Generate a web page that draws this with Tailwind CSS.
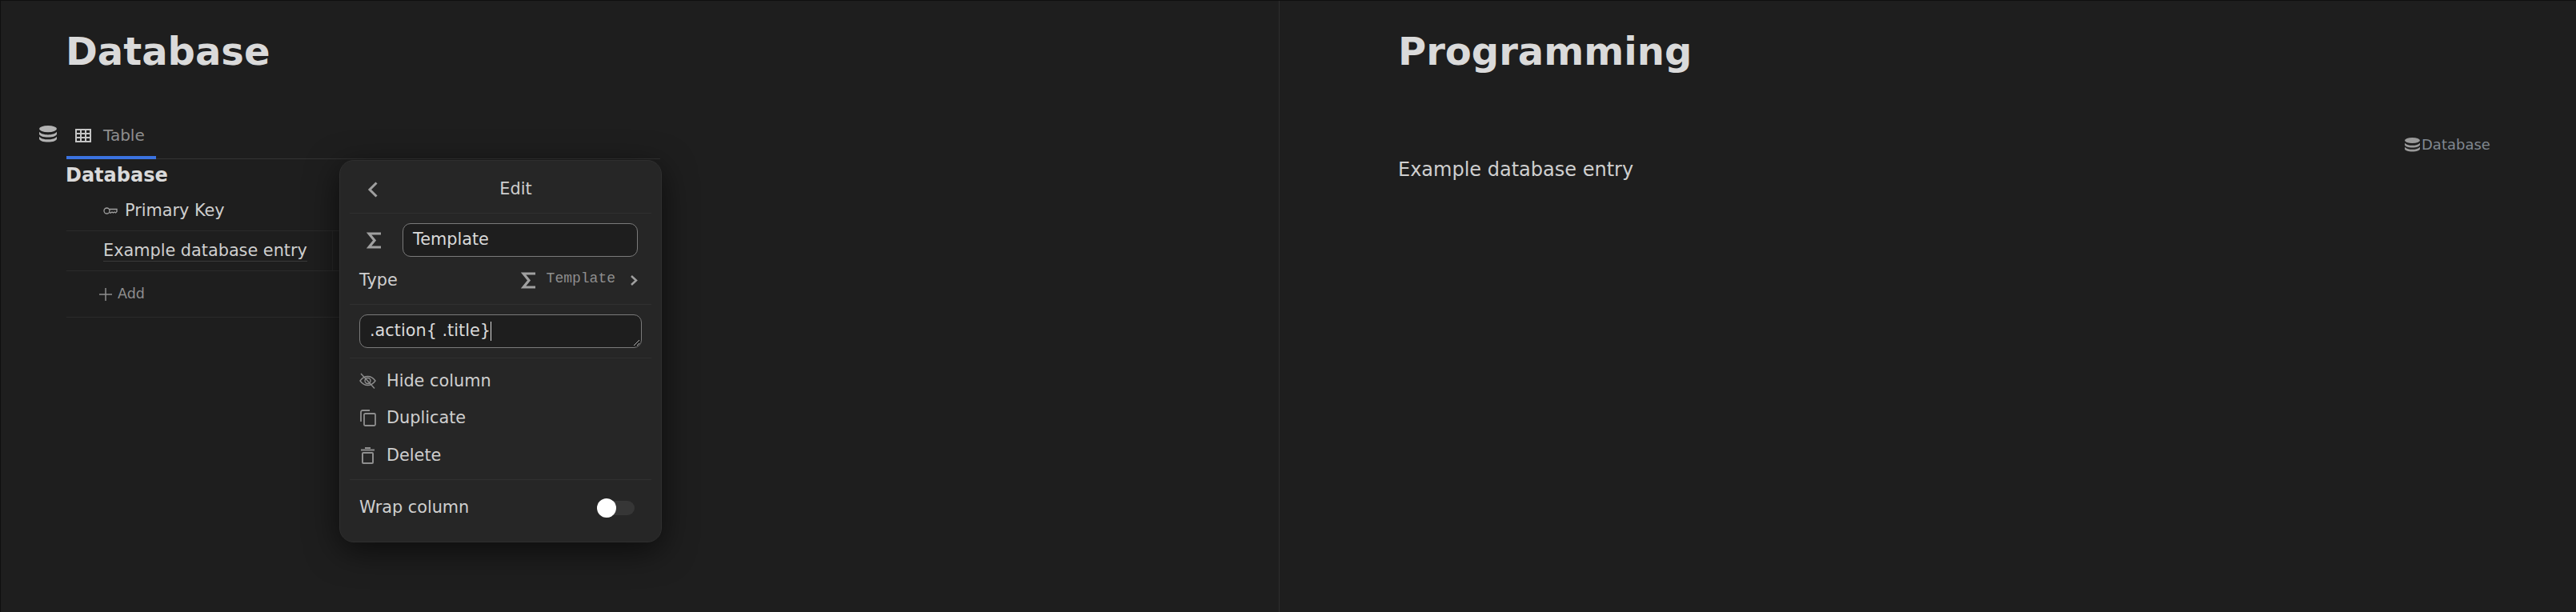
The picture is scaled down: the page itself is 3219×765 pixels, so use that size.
<!DOCTYPE html>
<html lang="en">
<head>
    <meta charset="UTF-8">
    <title>Database</title>
    <script src="https://cdn.jsdelivr.net/npm/@tailwindcss/browser@4"></script>
</head>
<body class="bg-[#1e1e1e] font-['DejaVu_Sans',sans-serif] text-[#dadada] overflow-hidden">
    <div class="flex h-[765px] w-[3219px] border-t border-l border-[#0f0f0f]">
        <!-- Left pane -->
        <div class="relative w-[1598px] shrink-0 border-r border-[#2d2d2d] pl-[82px]">
            <h1 class="-ml-[1px] pt-[35px] text-[48px] leading-[56px] font-bold text-[#dadada]">Database</h1>

            <!-- Tab bar -->
            <div class="relative mt-[53px] w-[742px] border-b border-[#333333]">
                <svg class="absolute top-[12px] -left-[34px] h-[21px] w-[22px] text-[#b3b3b3]" viewBox="2 1 20 23" preserveAspectRatio="none" fill="currentColor">
                    <ellipse cx="12" cy="5.5" rx="10" ry="4.5"/>
                    <path d="M2 9.5c1.5 2.6 5.6 4 10 4s8.5-1.4 10-4v3c0 2.500-4.500 4.500-10 4.500s-10-2-10-4.500z"/>
                    <path d="M2 16c1.500 2.600 5.600 4 10 4s8.500-1.400 10-4v3c0 2.500-4.500 4.500-10 4.500s-10-2-10-4.500z"/>
                </svg>
                <div class="-mb-px flex h-[54px] w-[112px] items-center gap-[15px] border-b-[4px] border-[#3b73e0] pb-[2px] pl-[11px] text-[20px] text-[#8e8e8e]">
                    <svg class="h-[17px] w-[20px] text-[#c4c4c4]" viewBox="0 0 20 17" fill="none" stroke="currentColor" stroke-width="2">
                        <rect x="1" y="1" width="18" height="15"/>
                        <path d="M1 6h18M1 11h18M7 1v15M13 1v15"/>
                    </svg>
                    <span>Table</span>
                </div>
            </div>

            <!-- Table -->
            <div class="w-[742px]">
                <div class="-ml-[1px] flex h-[40px] items-center text-[24px] leading-none font-bold text-[#dadada]">Database</div>
                <div class="flex h-[50px] items-center gap-[9px] border-b border-[#2a2a2a] pl-[46px] text-[20.8px] text-[#cfcfcf]">
                    <svg class="h-[9px] w-[18px] text-[#a0a0a0]" viewBox="0 0 18 9" fill="none" stroke="currentColor" stroke-width="1.3">
                        <circle cx="4.5" cy="4.5" r="3.5"/>
                        <path d="M8 2.500h9v3l-1.500 1.500-1.500-1-1.500 1-1.500-1-1.500 1H8"/>
                    </svg>
                    <span>Primary Key</span>
                </div>
                <div class="flex h-[50px] border-b border-[#2a2a2a] text-[20.8px] text-[#cfcfcf]">
                    <div class="flex w-[333px] items-center border-r border-[#262626] pl-[46px]">
                        <span class="border-b border-[#3a3a3a] leading-[25px]">Example database entry</span>
                    </div>
                </div>
                <div class="flex h-[58px] items-center gap-[7px] border-b border-[#2a2a2a] pl-[41px] text-[17.5px] text-[#8e8e8e]">
                    <svg class="h-[16px] w-[16px]" viewBox="0 0 16 16" fill="none" stroke="currentColor" stroke-width="1.5">
                        <path d="M8 0v16M0 8h16"/>
                    </svg>
                    <span>Add</span>
                </div>
            </div>

            <!-- Column editor popover -->
            <div class="absolute top-[199px] left-[423px] flex w-[403px] flex-col rounded-[18px] border border-[#2f2f2f] bg-[#262626] px-[12px] pb-[7px] text-[20.8px] text-[#cfcfcf] shadow-[0_10px_40px_rgba(0,0,0,0.6)]">
                <div class="relative flex h-[66px] items-center justify-center border-b border-[#303030] pt-[7px]">
                    <svg class="absolute top-[26px] left-[22px] h-[20px] w-[13px] text-[#a0a0a0]" viewBox="0 0 13 20" fill="none" stroke="currentColor" stroke-width="3">
                        <path d="M11.500 1.500L3 10l8.500 8.500"/>
                    </svg>
                    <span class="ml-[38px]">Edit</span>
                </div>
                <div class="flex items-center pt-[12px] pr-[17px] pl-[21px]">
                    <span class="w-[45px] shrink-0 text-[#a0a0a0]">
                        <svg class="h-[21px] w-[18px]" viewBox="0 0 18 21" fill="none" stroke="currentColor" stroke-width="3.2">
                            <path d="M18 2H3l7 8.500L3 19h15"/>
                        </svg>
                    </span>
                    <div class="flex h-[42px] grow items-center rounded-[10px] border border-[#7a7a7a] bg-[#1e1e1e] px-[12px] text-[#dadada]">Template</div>
                </div>
                <div class="flex h-[59px] items-center justify-between pr-[17px] pl-[12px]">
                    <span>Type</span>
                    <div class="flex items-center text-[#8e8e8e]">
                        <svg class="mr-[14px] h-[21px] w-[18px] text-[#a0a0a0]" viewBox="0 0 18 21" fill="none" stroke="currentColor" stroke-width="3.2">
                            <path d="M18 2H3l7 8.500L3 19h15"/>
                        </svg>
                        <span class="mr-[18px] -mt-[4px] font-['Liberation_Mono',monospace] text-[18px]">Template</span>
                        <svg class="h-[13px] w-[10px] text-[#a0a0a0]" viewBox="0 0 10 13" fill="none" stroke="currentColor" stroke-width="2.5">
                            <path d="M2 1l6 5.500L2 12"/>
                        </svg>
                    </div>
                </div>
                <div class="border-t border-[#303030] px-[12px] py-[12px]">
                    <div class="relative flex h-[42px] items-center rounded-[10px] border border-[#7a7a7a] bg-[#1e1e1e] px-[12px] text-[#dadada]">
                        <span>.action{ .title}</span>
                        <span class="h-[24px] w-px bg-[#dadada]"></span>
                        <svg class="absolute right-[1px] bottom-[1px] h-[9px] w-[9px] text-[#b0b0b0]" viewBox="0 0 9 9" fill="none" stroke="currentColor" stroke-width="1">
                            <path d="M1 8l7-7M5 8l3-3"/>
                        </svg>
                    </div>
                </div>
                <div class="flex flex-col border-y border-[#303030] px-[12px] pt-[5px] pb-[6.5px]">
                    <div class="flex h-[46.5px] items-center gap-[13px]">
                        <svg class="h-[21px] w-[21px] text-[#8e8e8e]" viewBox="0 0 21 21" fill="none" stroke="currentColor" stroke-width="1.4">
                            <path d="M1 10c2.500-3.500 5.500-5.500 9.500-5.500S17.500 6.500 20 10c-2.500 3.500-5.500 5.500-9.500 5.500S3.500 13.500 1 10z"/>
                            <circle cx="10.500" cy="10" r="3.500"/>
                            <path d="M2 1l17 18.500"/>
                        </svg>
                        <span>Hide column</span>
                    </div>
                    <div class="flex h-[46.5px] items-center gap-[13px]">
                        <svg class="h-[21px] w-[21px] text-[#8e8e8e]" viewBox="0 0 21 21" fill="none" stroke="currentColor" stroke-width="1.8">
                            <rect x="6" y="5" width="14" height="15" rx="1.500"/>
                            <path d="M2 15V3a2 2 0 0 1 2-2h9"/>
                        </svg>
                        <span>Duplicate</span>
                    </div>
                    <div class="flex h-[46.5px] items-center gap-[13px]">
                        <svg class="h-[21px] w-[21px] text-[#8e8e8e]" viewBox="0 0 21 21" fill="none" stroke="currentColor" stroke-width="2">
                            <path d="M2 3.500h17M7 1h7"/>
                            <rect x="4" y="7" width="13" height="13" rx="1"/>
                        </svg>
                        <span>Delete</span>
                    </div>
                </div>
                <div class="flex h-[70px] items-center justify-between pr-[21px] pl-[12px]">
                    <span>Wrap column</span>
                    <div class="relative h-[18px] w-[45px] rounded-full bg-[#363636]">
                        <div class="absolute -top-[3px] -left-[2px] h-[24px] w-[24px] rounded-full bg-white"></div>
                    </div>
                </div>
            </div>
        </div>

        <!-- Right pane -->
        <div class="relative grow pl-[148px]">
            <h1 class="pt-[35px] text-[48px] leading-[56px] font-bold text-[#dadada]">Programming</h1>
            <p class="mt-[106px] text-[24px] leading-[28px] text-[#cfcfcf]">Example database entry</p>
            <div class="absolute top-[166px] left-[1406px] flex items-center gap-[2px] text-[18px] text-[#808890]">
                <svg class="h-[18px] w-[19px] text-[#9a9a9a]" viewBox="2 1 20 23" preserveAspectRatio="none" fill="currentColor">
                    <ellipse cx="12" cy="5.500" rx="10" ry="4.500"/>
                    <path d="M2 9.500c1.500 2.600 5.600 4 10 4s8.500-1.400 10-4v3c0 2.500-4.500 4.500-10 4.500s-10-2-10-4.500z"/>
                    <path d="M2 16c1.500 2.600 5.600 4 10 4s8.500-1.400 10-4v3c0 2.500-4.500 4.500-10 4.500s-10-2-10-4.500z"/>
                </svg>
                <span>Database</span>
            </div>
        </div>
    </div>
</body>
</html>
